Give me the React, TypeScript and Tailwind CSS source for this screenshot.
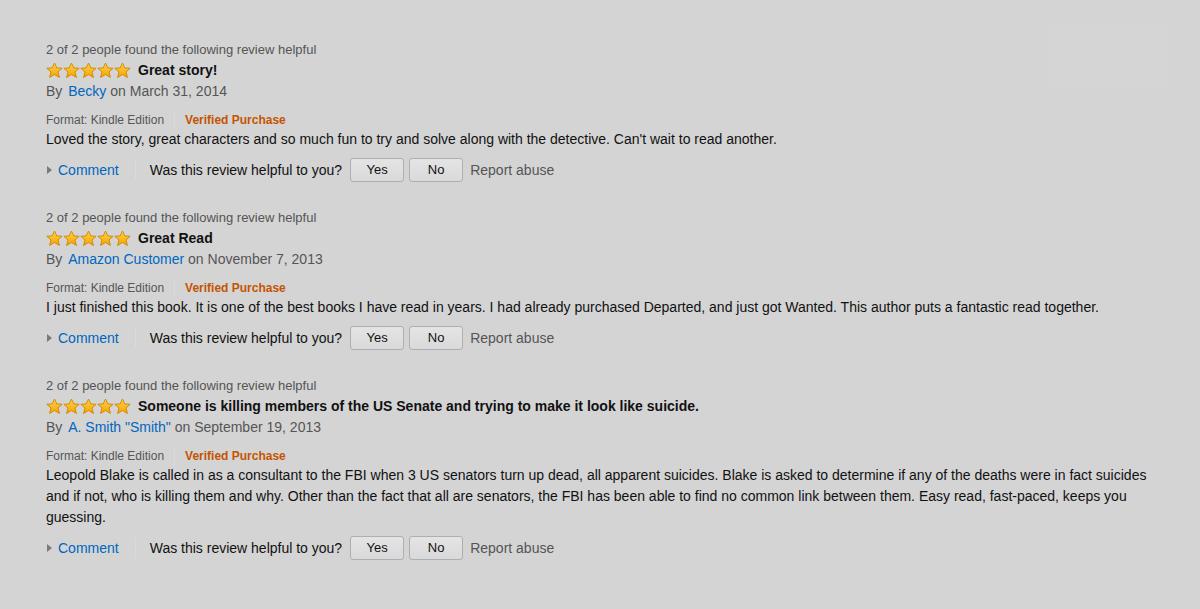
import React from 'react';

type Review = {
  helpful: string;
  title: string;
  author: string;
  date: string;
  body: string;
};

const reviews: Review[] = [
  {
    helpful: '2 of 2 people found the following review helpful',
    title: 'Great story!',
    author: 'Becky',
    date: 'March 31, 2014',
    body: "Loved the story, great characters and so much fun to try and solve along with the detective. Can't wait to read another.",
  },
  {
    helpful: '2 of 2 people found the following review helpful',
    title: 'Great Read',
    author: 'Amazon Customer',
    date: 'November 7, 2013',
    body: 'I just finished this book. It is one of the best books I have read in years. I had already purchased Departed, and just got Wanted. This author puts a fantastic read together.',
  },
  {
    helpful: '2 of 2 people found the following review helpful',
    title: 'Someone is killing members of the US Senate and trying to make it look like suicide.',
    author: 'A. Smith "Smith"',
    date: 'September 19, 2013',
    body: 'Leopold Blake is called in as a consultant to the FBI when 3 US senators turn up dead, all apparent suicides. Blake is asked to determine if any of the deaths were in fact suicides and if not, who is killing them and why. Other than the fact that all are senators, the FBI has been able to find no common link between them. Easy read, fast-paced, keeps you guessing.',
  },
];

function Star({ id }: { id: string }) {
  return (
    <svg width="17" height="17" viewBox="0 0 20 20" className="block">
      <defs>
        <linearGradient id={id} x1="0" y1="0" x2="0" y2="1">
          <stop offset="0" stopColor="#ffd54a" />
          <stop offset="1" stopColor="#f6a300" />
        </linearGradient>
      </defs>
      <polygon
        points="10,1.2 12.7,7 19,7.4 14.1,11.6 15.8,18.2 10,14.6 4.2,18.2 5.9,11.6 1,7.4 7.3,7"
        fill={`url(#${id})`}
        stroke="#d08600"
        strokeWidth="1.1"
        strokeLinejoin="round"
      />
    </svg>
  );
}

function Stars({ prefix }: { prefix: string }) {
  return (
    <div className="flex items-center">
      {[0, 1, 2, 3, 4].map((i) => (
        <Star key={i} id={`${prefix}-star-${i}`} />
      ))}
    </div>
  );
}

function ReviewBlock({ review, index }: { review: Review; index: number }) {
  return (
    <div className="mb-[26px]">
      <div className="h-5 leading-5 text-[13px] text-[#555]">{review.helpful}</div>

      <div className="flex h-5 items-center gap-[7px]">
        <Stars prefix={`r${index}`} />
        <span className="text-[14px] font-bold text-[#111]">{review.title}</span>
      </div>

      <div className="h-[22px] leading-[22px] text-[14px] text-[#555]">
        By <a href="#" className="ml-[2px] text-[#0066c0]">{review.author}</a> on {review.date}
      </div>

      <div className="mt-2 flex h-[19px] items-center text-[12px]">
        <span className="pr-[10px] text-[#555]">Format: Kindle Edition</span>
        <span className="h-[18px] border-l border-[#dadada]" />
        <span className="pl-[10px] font-bold text-[#c45500]">Verified Purchase</span>
      </div>

      <p className="max-w-[1112px] text-[14px] leading-[21px] text-[#111]">{review.body}</p>

      <div className="mt-[8px] flex h-6 items-center text-[14px]">
        <svg width="5" height="8" viewBox="0 0 5 8" className="mr-[6px] ml-px">
          <polygon points="0,0 5,4 0,8" fill="#7a7a7a" />
        </svg>
        <a href="#" className="pr-4 text-[#0066c0]">Comment</a>
        <span className="h-5 border-l border-[#dadada]" />
        <span className="pl-[14px] text-[#111]">Was this review helpful to you?</span>
        <button className="ml-[8px] h-6 w-[54px] rounded-[3px] border border-[#acafb4] bg-gradient-to-b from-[#e4e4e4] to-[#d9d9d9] text-[13px] text-[#111]">
          Yes
        </button>
        <button className="ml-[5px] h-6 w-[54px] rounded-[3px] border border-[#acafb4] bg-gradient-to-b from-[#e4e4e4] to-[#d9d9d9] text-[13px] text-[#111]">
          No
        </button>
        <span className="ml-[7px] text-[#555]">Report abuse</span>
      </div>
    </div>
  );
}

export default function App() {
  return (
    <div
      className="relative min-h-[609px] w-full overflow-hidden bg-[#d4d4d4] pt-[40px] pl-[46px]"
      style={{ fontFamily: '"Liberation Sans", Arial, Helvetica, sans-serif' }}
    >
      {/* faint ad placeholder, top right */}
      <div className="absolute top-[22px] left-[1048px] h-[66px] w-[118px] bg-[#d5d5d5]" />

      {reviews.map((r, i) => (
        <ReviewBlock key={i} review={r} index={i} />
      ))}
    </div>
  );
}
